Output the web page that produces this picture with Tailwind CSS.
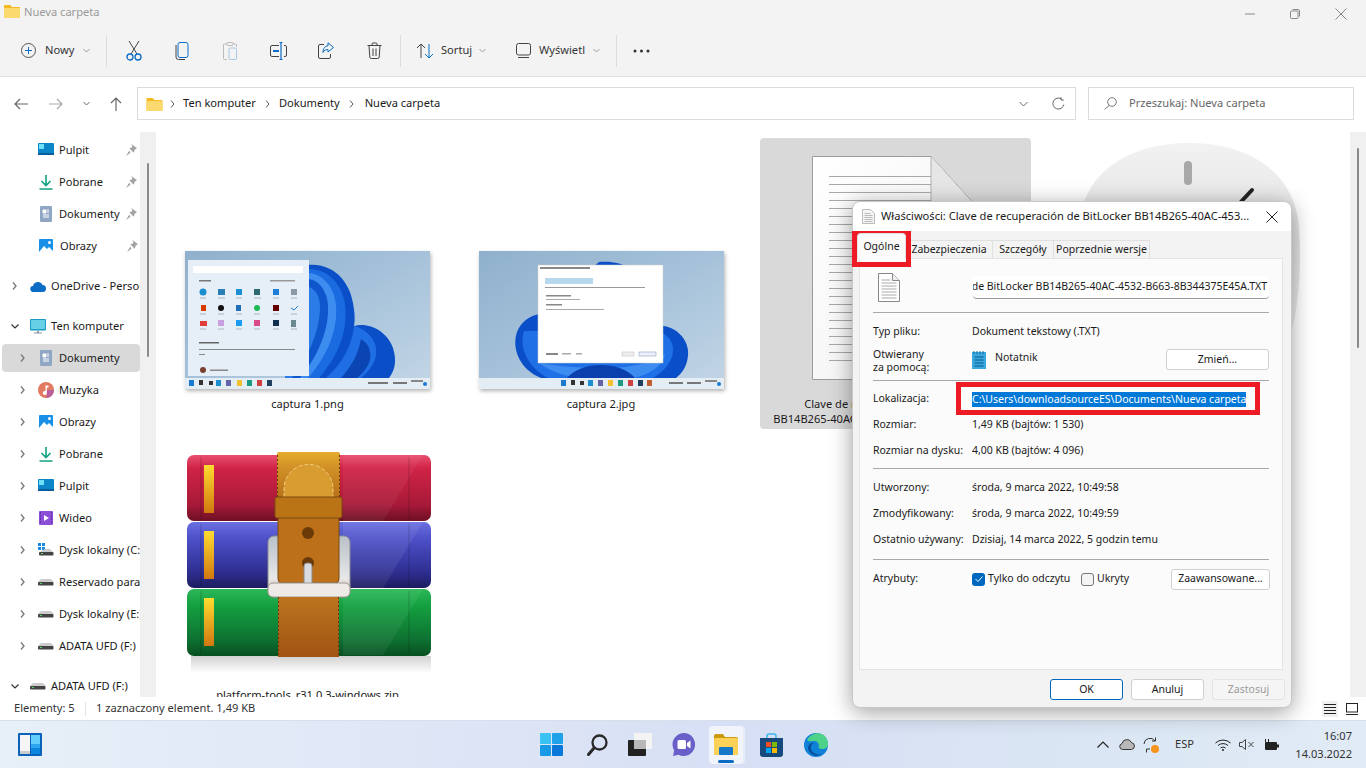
<!DOCTYPE html>
<html lang="pl">

<head>
    <meta charset="UTF-8">
    <title>Nueva carpeta</title>
    <script src="https://cdn.jsdelivr.net/npm/@tailwindcss/browser@4"></script>
</head>

<body class="bg-white text-[#1a1a1a] text-[11.1px] font-['Noto_Sans',sans-serif]">
<div class="relative w-[1366px] h-[768px] overflow-hidden flex flex-col">

    <!-- Title bar -->
    <div class="h-[25px] shrink-0 bg-[#f3f3f3] flex items-start pl-[4px] pt-[4px]">
        <svg width="16" height="14" viewBox="0 0 16 14"><path d="M0 2a1 1 0 0 1 1-1h5l2 2h7a1 1 0 0 1 1 1v9a1 1 0 0 1-1 1H1a1 1 0 0 1-1-1z" fill="#f5b921"/><rect y="4" width="16" height="10" rx="1" fill="#fcd96f"/></svg>
        <span class="ml-[4px] leading-4 text-[#9a9a9a]">Nueva carpeta</span>
        <div class="ml-auto flex items-center pt-[4px] pr-[19px]">
            <svg class="mr-[35px]" width="10" height="10" viewBox="0 0 10 10"><path d="M0 5h10" stroke="#888" /></svg>
            <svg class="mr-[35px]" width="10" height="10" viewBox="0 0 10 10" fill="none" stroke="#888"><rect x=".5" y="2" width="7.500" height="7.500" rx="1"/><path d="M2.500 .5h5.500a1.500 1.500 0 0 1 1.500 1.500v5.500"/></svg>
            <svg width="12" height="12" viewBox="0 0 12 12" fill="none" stroke="#888"><path d="M.5 .5l11 11M11.500 .5l-11 11"/></svg>
        </div>
    </div>

    <!-- Toolbar -->
    <div class="h-[52px] shrink-0 bg-[#f3f3f3] border-b border-[#e0e0e0] flex items-center pl-[21px] text-[#333]">
        <svg width="15" height="15" viewBox="0 0 15 15" fill="none"><circle cx="7.500" cy="7.500" r="7" stroke="#555"/><path d="M7.500 4v7M4 7.500h7" stroke="#0a6cc4"/></svg>
        <span class="ml-[9px] w-[38px]">Nowy</span>
        <svg width="7" height="5" viewBox="0 0 7 5" fill="none" stroke="#999"><path d="M.5 1l3 3 3-3"/></svg>
        <div class="w-px h-[32px] bg-[#dcdcdc] ml-[16px] mr-[3px]"></div>
        <div class="w-[48px] flex justify-center">
            <svg width="16" height="20" viewBox="0 0 16 20" fill="none"><path d="M3 0l8 13M13 0L5 13" stroke="#444"/><circle cx="4" cy="16" r="3" stroke="#0a6cc4" stroke-width="1.300"/><circle cx="12" cy="16" r="3" stroke="#0a6cc4" stroke-width="1.300"/></svg>
        </div>
        <div class="w-[48px] flex justify-center">
            <svg width="14" height="18" viewBox="0 0 14 18" fill="none"><rect x="3" y=".5" width="10" height="15" rx="2" stroke="#0a6cc4"/><path d="M1 3v12a2.500 2.500 0 0 0 2.500 2.500H10" stroke="#444"/></svg>
        </div>
        <div class="w-[48px] flex justify-center">
            <svg width="14" height="18" viewBox="0 0 14 18" fill="none"><path d="M4 2H1.500a1 1 0 0 0-1 1v13.500a1 1 0 0 0 1 1H4M10 2h2.500a1 1 0 0 1 1 1v2" stroke="#bbb"/><rect x="4" y=".5" width="6" height="3" rx="1" stroke="#bbb"/><rect x="6" y="6" width="7.500" height="11.500" rx="1.500" stroke="#a5c8e8"/></svg>
        </div>
        <div class="w-[48px] flex justify-center">
            <svg width="17" height="18" viewBox="0 0 17 18" fill="none"><path d="M9 3.500H2a1.500 1.500 0 0 0-1.500 1.500v8A1.500 1.500 0 0 0 2 14.500h7M14 3.500h1a1.500 1.500 0 0 1 1.500 1.500v8a1.500 1.500 0 0 1-1.500 1.500h-1" stroke="#444"/><path d="M9.500 .5h3M11 .5v17M9.500 17.500h3" stroke="#0a6cc4" stroke-width="1.200"/><rect x="3" y="8" width="6" height="2" fill="#0a6cc4"/></svg>
        </div>
        <div class="w-[48px] flex justify-center">
            <svg width="16" height="17" viewBox="0 0 16 17" fill="none"><path d="M6 2.500H2A1.500 1.500 0 0 0 .5 4v11A1.500 1.500 0 0 0 2 16.500h9a1.500 1.500 0 0 0 1.500-1.500v-3" stroke="#444"/><path d="M10 .8L15.500 5.500 10 10V7.500c-2.500 0-4 1-5 3 0-4 2-6.500 5-6.700z" stroke="#0a6cc4" stroke-linejoin="round"/></svg>
        </div>
        <div class="w-[48px] flex justify-center">
            <svg width="15" height="17" viewBox="0 0 15 17" fill="none" stroke="#444"><path d="M.5 3.500h14M5 3.500V2a1 1 0 0 1 1-1h3a1 1 0 0 1 1 1v1.500M2 3.500l.8 11.500a1.500 1.500 0 0 0 1.500 1.500h6.400a1.500 1.500 0 0 0 1.500-1.500L13 3.500M6 6.500v7.500M9 6.500v7.500"/></svg>
        </div>
        <div class="w-px h-[32px] bg-[#dcdcdc] ml-[2px]"></div>
        <svg class="ml-[15px]" width="18" height="16" viewBox="0 0 18 16" fill="none"><path d="M5 15V1M1 5l4-4 4 4" stroke="#444"/><path d="M13 1v14M9 11l4 4 4-4" stroke="#0a6cc4"/></svg>
        <span class="ml-[7px] w-[38px]">Sortuj</span>
        <svg width="7" height="5" viewBox="0 0 7 5" fill="none" stroke="#999"><path d="M.5 1l3 3 3-3"/></svg>
        <svg class="ml-[30px]" width="15" height="15" viewBox="0 0 15 15" fill="none" stroke="#444"><rect x=".5" y=".5" width="14" height="11.500" rx="2"/><path d="M2 14.500h11"/></svg>
        <span class="ml-[8px] w-[54px]">Wyświetl</span>
        <svg width="7" height="5" viewBox="0 0 7 5" fill="none" stroke="#999"><path d="M.5 1l3 3 3-3"/></svg>
        <div class="w-px h-[32px] bg-[#dcdcdc] ml-[16px]"></div>
        <svg class="ml-[16px]" width="17" height="4" viewBox="0 0 17 4" fill="#333"><circle cx="2" cy="2" r="1.500"/><circle cx="8.500" cy="2" r="1.500"/><circle cx="15" cy="2" r="1.500"/></svg>
    </div>

    <!-- Address row -->
    <div class="h-[55px] shrink-0 flex items-start pt-[10px]">
        <div class="w-[137px] h-[33px] flex items-center text-[#777]">
            <svg class="ml-[14px]" width="14" height="12" viewBox="0 0 14 12" fill="none" stroke="#666" stroke-width="1.200"><path d="M14 6H1M6 1L1 6l5 5"/></svg>
            <svg class="ml-[21px]" width="14" height="12" viewBox="0 0 14 12" fill="none" stroke="#aaa" stroke-width="1.200"><path d="M0 6h13M8 1l5 5-5 5"/></svg>
            <svg class="ml-[20px]" width="7" height="5" viewBox="0 0 7 5" fill="none" stroke="#666"><path d="M.5 1l3 3 3-3"/></svg>
            <svg class="ml-[20px]" width="12" height="14" viewBox="0 0 12 14" fill="none" stroke="#666" stroke-width="1.200"><path d="M6 14V1M1 6l5-5 5 5"/></svg>
        </div>
        <div class="w-[939px] h-[33px] border border-[#dcdcdc] flex items-center pl-[8px]">
            <svg width="17" height="14" viewBox="0 0 16 14"><path d="M0 2a1 1 0 0 1 1-1h5l2 2h7a1 1 0 0 1 1 1v9a1 1 0 0 1-1 1H1a1 1 0 0 1-1-1z" fill="#f5b921"/><rect y="4" width="16" height="10" rx="1" fill="#fcd96f"/></svg>
            <svg class="ml-[7px]" width="5" height="8" viewBox="0 0 5 8" fill="none" stroke="#555"><path d="M1 .5l3 3.500-3 3.500"/></svg>
            <span class="ml-[8px]">Ten komputer</span>
            <svg class="ml-[9px]" width="5" height="8" viewBox="0 0 5 8" fill="none" stroke="#555"><path d="M1 .5l3 3.500-3 3.500"/></svg>
            <span class="ml-[9px]">Dokumenty</span>
            <svg class="ml-[9px]" width="5" height="8" viewBox="0 0 5 8" fill="none" stroke="#555"><path d="M1 .5l3 3.500-3 3.500"/></svg>
            <span class="ml-[11px]">Nueva carpeta</span>
            <div class="ml-auto flex items-center gap-[24px] pr-[10px]">
                <svg width="9" height="6" viewBox="0 0 9 6" fill="none" stroke="#666"><path d="M.5 1l4 4 4-4"/></svg>
                <svg width="13" height="13" viewBox="0 0 13 13" fill="none" stroke="#666"><path d="M11.800 7.500A5.500 5.500 0 1 1 9.500 2M9 .2V3h2.800"/></svg>
            </div>
        </div>
        <div class="ml-[12px] w-[266px] h-[33px] border border-[#dcdcdc] flex items-center pl-[15px] text-[#666]">
            <svg width="13" height="13" viewBox="0 0 13 13" fill="none" stroke="#777"><circle cx="8" cy="5" r="4.300"/><path d="M5 8.500L.5 12.500"/></svg>
            <span class="ml-[12px]">Przeszukaj: Nueva carpeta</span>
        </div>
    </div>

    <!-- Main -->
    <div class="flex-1 flex min-h-0">
        <!-- Sidebar -->
        <div class="w-[140px] shrink-0 overflow-hidden pt-[4px] pl-[2px] whitespace-nowrap">
            <div class="h-[28px] mb-[4px] flex items-center pl-[36px]">
                <svg class="shrink-0" width="16" height="14" viewBox="0 0 16 14"><rect width="16" height="12" rx="1" fill="#0c86c6"/><rect x="1" y="1" width="5" height="5" fill="#6fe0f5"/><rect y="10" width="16" height="2" fill="#075e9c"/></svg>
                <span class="ml-[5px] w-[67px]">Pulpit</span>
                <svg class="shrink-0" width="11" height="12" viewBox="0 0 10 11" fill="#a0a0a0"><path d="M5 0l5 4-2 1-1 3-4-4 3-1zM3 6l-3 5 4-3z"/></svg>
            </div>
            <div class="h-[28px] mb-[4px] flex items-center pl-[36px]">
                <svg class="shrink-0" width="16" height="16" viewBox="0 0 16 16" fill="none" stroke="#10a37f" stroke-width="1.600"><path d="M8 1v10M3.500 7L8 11.500 12.500 7M1.500 15h13"/></svg>
                <span class="ml-[5px] w-[67px]">Pobrane</span>
                <svg class="shrink-0" width="11" height="12" viewBox="0 0 10 11" fill="#a0a0a0"><path d="M5 0l5 4-2 1-1 3-4-4 3-1zM3 6l-3 5 4-3z"/></svg>
            </div>
            <div class="h-[28px] mb-[4px] flex items-center pl-[38px]">
                <svg class="shrink-0" width="12" height="16" viewBox="0 0 12 16"><rect width="12" height="16" rx="1" fill="#8fa7c4"/><path d="M3 4h3v3H3zM7 4h2M7 6h2M3 9h6M3 11h6" stroke="#fff" fill="#fff"/></svg>
                <span class="ml-[7px] w-[67px]">Dokumenty</span>
                <svg class="shrink-0" width="11" height="12" viewBox="0 0 10 11" fill="#a0a0a0"><path d="M5 0l5 4-2 1-1 3-4-4 3-1zM3 6l-3 5 4-3z"/></svg>
            </div>
            <div class="h-[28px] mb-[12px] flex items-center pl-[37px]">
                <svg class="shrink-0" width="14" height="14" viewBox="0 0 14 14"><rect width="14" height="14" rx="1" fill="#1a8fe8"/><path d="M0 13l5-6 3 3 2-2 4 4v2H0z" fill="#fff"/><circle cx="10.500" cy="3.500" r="1.500" fill="#fff"/></svg>
                <span class="ml-[7px] w-[67px]">Obrazy</span>
                <svg class="shrink-0" width="11" height="12" viewBox="0 0 10 11" fill="#a0a0a0"><path d="M5 0l5 4-2 1-1 3-4-4 3-1zM3 6l-3 5 4-3z"/></svg>
            </div>
            <div class="h-[28px] mb-[12px] flex items-center pl-[10px]">
                <svg class="shrink-0" width="5" height="8" viewBox="0 0 5 8" fill="none" stroke="#777" stroke-width="1.300"><path d="M1 .5l3 3.500-3 3.500"/></svg>
                <svg class="shrink-0 ml-[13px]" width="16" height="11" viewBox="0 0 16 11"><path d="M3.500 11a3 3 0 0 1-.5-6 5 5 0 0 1 9.500-1A3.500 3.500 0 0 1 12.500 11z" fill="#0a6cc4"/></svg>
                <span class="ml-[5px]">OneDrive - Personal</span>
            </div>
            <div class="h-[28px] mb-[4px] flex items-center pl-[9px]">
                <svg class="shrink-0" width="8" height="5" viewBox="0 0 8 5" fill="none" stroke="#333" stroke-width="1.200"><path d="M.5 .5L4 4 7.500 .5"/></svg>
                <svg class="shrink-0 ml-[11px]" width="16" height="15" viewBox="0 0 16 15"><rect width="16" height="11.500" rx="1" fill="#1e9bc4"/><rect x="1" y="1" width="14" height="9" fill="#66d0e6"/><path d="M7 12h2v1.500h3v1H4v-1h3z" fill="#8a9aa8"/></svg>
                <span class="ml-[5px]">Ten komputer</span>
            </div>
            <div class="h-[28px] mb-[4px] flex items-center pl-[18px] bg-[#d9d9d9] rounded-sm">
                <svg class="shrink-0" width="5" height="8" viewBox="0 0 5 8" fill="none" stroke="#777" stroke-width="1.300"><path d="M1 .5l3 3.500-3 3.500"/></svg>
                <svg class="shrink-0 ml-[15px]" width="12" height="16" viewBox="0 0 12 16"><rect width="12" height="16" rx="1" fill="#8fa7c4"/><path d="M3 4h3v3H3zM7 4h2M7 6h2M3 9h6M3 11h6" stroke="#fff" fill="#fff"/></svg>
                <span class="ml-[7px]">Dokumenty</span>
            </div>
            <div class="h-[28px] mb-[4px] flex items-center pl-[18px]">
                <svg class="shrink-0" width="5" height="8" viewBox="0 0 5 8" fill="none" stroke="#777" stroke-width="1.300"><path d="M1 .5l3 3.500-3 3.500"/></svg>
                <svg class="shrink-0 ml-[13px]" width="16" height="16" viewBox="0 0 16 16"><circle cx="8" cy="8" r="8" fill="#e27a62"/><path d="M8 8a8 8 0 0 1 0 8 8 8 0 0 0 8-8z" fill="#b85f9c"/><path d="M7.500 3.500h3v2h-1.700V11a2 2 0 1 1-1.300-1.900z" fill="#fff"/></svg>
                <span class="ml-[5px]">Muzyka</span>
            </div>
            <div class="h-[28px] mb-[4px] flex items-center pl-[18px]">
                <svg class="shrink-0" width="5" height="8" viewBox="0 0 5 8" fill="none" stroke="#777" stroke-width="1.300"><path d="M1 .5l3 3.500-3 3.500"/></svg>
                <svg class="shrink-0 ml-[14px]" width="14" height="14" viewBox="0 0 14 14"><rect width="14" height="14" rx="1" fill="#1a8fe8"/><path d="M0 13l5-6 3 3 2-2 4 4v2H0z" fill="#fff"/><circle cx="10.500" cy="3.500" r="1.500" fill="#fff"/></svg>
                <span class="ml-[6px]">Obrazy</span>
            </div>
            <div class="h-[28px] mb-[4px] flex items-center pl-[18px]">
                <svg class="shrink-0" width="5" height="8" viewBox="0 0 5 8" fill="none" stroke="#777" stroke-width="1.300"><path d="M1 .5l3 3.500-3 3.500"/></svg>
                <svg class="shrink-0 ml-[13px]" width="16" height="16" viewBox="0 0 16 16" fill="none" stroke="#10a37f" stroke-width="1.600"><path d="M8 1v10M3.500 7L8 11.500 12.500 7M1.500 15h13"/></svg>
                <span class="ml-[5px]">Pobrane</span>
            </div>
            <div class="h-[28px] mb-[4px] flex items-center pl-[18px]">
                <svg class="shrink-0" width="5" height="8" viewBox="0 0 5 8" fill="none" stroke="#777" stroke-width="1.300"><path d="M1 .5l3 3.500-3 3.500"/></svg>
                <svg class="shrink-0 ml-[13px]" width="16" height="14" viewBox="0 0 16 14"><rect width="16" height="12" rx="1" fill="#0c86c6"/><rect x="1" y="1" width="5" height="5" fill="#6fe0f5"/><rect y="10" width="16" height="2" fill="#075e9c"/></svg>
                <span class="ml-[5px]">Pulpit</span>
            </div>
            <div class="h-[28px] mb-[4px] flex items-center pl-[18px]">
                <svg class="shrink-0" width="5" height="8" viewBox="0 0 5 8" fill="none" stroke="#777" stroke-width="1.300"><path d="M1 .5l3 3.500-3 3.500"/></svg>
                <svg class="shrink-0 ml-[14px]" width="14" height="14" viewBox="0 0 14 14"><rect width="14" height="14" rx="1" fill="#8c4fd8"/><path d="M5 4l5 3-5 3z" fill="#fff"/><path d="M1 2h1M1 5h1M1 8h1M1 11h1M12 2h1M12 5h1M12 8h1M12 11h1" stroke="#3a1a70"/></svg>
                <span class="ml-[6px]">Wideo</span>
            </div>
            <div class="h-[28px] mb-[4px] flex items-center pl-[18px]">
                <svg class="shrink-0" width="5" height="8" viewBox="0 0 5 8" fill="none" stroke="#777" stroke-width="1.300"><path d="M1 .5l3 3.500-3 3.500"/></svg>
                <svg class="shrink-0 ml-[13px]" width="16" height="14" viewBox="0 0 16 14"><path d="M0 0h3v3H0zM4 0h3v3H4zM0 4h3v3H0zM4 4h3v3H4z" fill="#1689e6"/><path d="M7 6h5l3.500 3.500H1z" fill="#ccc"/><rect x="1" y="9" width="14.500" height="3.500" rx="1" fill="#444"/><rect x="3" y="10" width="2" height="1" fill="#5cd65c"/></svg>
                <span class="ml-[5px]">Dysk lokalny (C:)</span>
            </div>
            <div class="h-[28px] mb-[4px] flex items-center pl-[18px]">
                <svg class="shrink-0" width="5" height="8" viewBox="0 0 5 8" fill="none" stroke="#777" stroke-width="1.300"><path d="M1 .5l3 3.500-3 3.500"/></svg>
                <svg class="shrink-0 ml-[13px]" width="16" height="7" viewBox="0 0 16 7"><path d="M3 0h10l3 3H0z" fill="#ccc"/><rect y="3" width="15.500" height="3.500" rx="1" fill="#444"/><rect x="2" y="4" width="2" height="1" fill="#5cd65c"/></svg>
                <span class="ml-[5px]">Reservado para</span>
            </div>
            <div class="h-[28px] mb-[4px] flex items-center pl-[18px]">
                <svg class="shrink-0" width="5" height="8" viewBox="0 0 5 8" fill="none" stroke="#777" stroke-width="1.300"><path d="M1 .5l3 3.500-3 3.500"/></svg>
                <svg class="shrink-0 ml-[13px]" width="16" height="7" viewBox="0 0 16 7"><path d="M3 0h10l3 3H0z" fill="#ccc"/><rect y="3" width="15.500" height="3.500" rx="1" fill="#444"/><rect x="2" y="4" width="2" height="1" fill="#5cd65c"/></svg>
                <span class="ml-[5px]">Dysk lokalny (E:)</span>
            </div>
            <div class="h-[28px] mb-[12px] flex items-center pl-[18px]">
                <svg class="shrink-0" width="5" height="8" viewBox="0 0 5 8" fill="none" stroke="#777" stroke-width="1.300"><path d="M1 .5l3 3.500-3 3.500"/></svg>
                <svg class="shrink-0 ml-[13px]" width="16" height="7" viewBox="0 0 16 7"><path d="M3 0h10l3 3H0z" fill="#ccc"/><rect y="3" width="15.500" height="3.500" rx="1" fill="#444"/><rect x="2" y="4" width="2" height="1" fill="#5cd65c"/></svg>
                <span class="ml-[5px]">ADATA UFD (F:)</span>
            </div>
            <div class="h-[28px] flex items-center pl-[9px]">
                <svg class="shrink-0" width="8" height="5" viewBox="0 0 8 5" fill="none" stroke="#333" stroke-width="1.200"><path d="M.5 .5L4 4 7.500 .5"/></svg>
                <svg class="shrink-0 ml-[11px]" width="16" height="7" viewBox="0 0 16 7"><path d="M3 0h10l3 3H0z" fill="#ccc"/><rect y="3" width="15.500" height="3.500" rx="1" fill="#444"/><rect x="2" y="4" width="2" height="1" fill="#5cd65c"/></svg>
                <span class="ml-[5px]">ADATA UFD (F:)</span>
            </div>
        </div>
        <div class="w-[16px] shrink-0 bg-[#f0f0f0] pt-[31px] pl-[7px]">
            <div class="w-[2px] h-[194px] bg-[#8a8a8a] rounded-full"></div>
        </div>

        <!-- Files -->
        <div class="flex-1 min-w-0 overflow-hidden pt-[6px] pl-[16px]">
            <div class="grid grid-cols-[repeat(4,271px)] auto-rows-[291px] gap-x-[22.500px]">

                <!-- captura 1 -->
                <div class="pt-[5px]">
                    <div class="h-[246px] flex items-end justify-center">
                        <svg class="shadow-[1px_2px_4px_rgba(0,0,0,0.3)]" width="245" height="138" viewBox="0 0 245 138">
                            <defs>
                                <linearGradient id="wall1" x1="0" y1="0" x2="1" y2="1"><stop offset="0" stop-color="#8fb0cc"/><stop offset=".5" stop-color="#a6c2da"/><stop offset="1" stop-color="#c3d6e6"/></linearGradient>
                            </defs>
                            <rect width="245" height="138" fill="url(#wall1)"/>
                            <path d="M122 14c24-3 42 14 46 38 2 11 2 18 1 23 15-4 33 5 39 22 4 13 2 22-4 30H100V20z" fill="#0b4fc8"/>
                            <path d="M122 18c20-1 35 14 38 36 3 25-6 50-26 73h-34V20z" fill="#1a6ae0"/>
                            <path d="M122 22c15 0 27 13 29 32 2 24-8 50-28 73h-23V25z" fill="#3d8cf0"/>
                            <path d="M122 28c11 0 20 11 21 27 1 24-10 50-28 72h-15V30z" fill="#0f55cc"/>
                            <path d="M122 36c7 0 13 8 13 20 0 24-12 50-28 71h-7V40z" fill="#2b7ce6"/>
                            <path d="M169 75c-2 20-12 38-28 52h35c12-10 18-22 14-34-3-9-12-16-21-18z" fill="#1f6ee4"/>
                            <path d="M176 88c-3 16-10 28-20 39h16c9-7 15-17 13-26-1-6-4-10-9-13z" fill="#0b45b4"/>
                            <rect x="3" y="9" width="121" height="116" fill="#e6eff8"/>
                            <rect x="8" y="15" width="110" height="7" fill="#fff"/>
                            <rect x="14" y="29" width="12" height="1.500" fill="#777"/><rect x="85" y="29" width="25" height="1.500" fill="#999"/>
                            <circle cx="18" cy="41" r="3.500" fill="#1c8fd0"/><rect x="33" y="38" width="7" height="6" fill="#2a7fb8"/><rect x="51" y="38" width="6" height="6" fill="#1c8fd0"/><rect x="69" y="38" width="6" height="6" fill="#2c6a70"/><rect x="88" y="38" width="6" height="6" fill="#1f7fd8"/><rect x="106" y="38" width="6" height="6" fill="#8b99a8"/>
                            <rect x="16" y="54" width="5" height="6" fill="#d83b01"/><circle cx="36" cy="57" r="3" fill="#111"/><rect x="51" y="54" width="5" height="6" fill="#1f6fb8"/><circle cx="72" cy="57" r="3" fill="#1db954"/><rect x="88" y="54" width="6" height="6" fill="#600"/><path d="M106 57l3 2 4-4" stroke="#1f7fd8" fill="none"/>
                            <rect x="15" y="70" width="7" height="5" fill="#e03c3c"/><rect x="33" y="69" width="6" height="6" fill="#c8a0e0"/><rect x="51" y="69" width="6" height="6" fill="#1d9bf0"/><rect x="69" y="69" width="6" height="6" fill="#d84a8a"/><rect x="88" y="69" width="6" height="6" fill="#103050"/><rect x="106" y="69" width="5" height="7" fill="#6a8a90"/>
                            <path d="M15 47h6M33 47h7M51 47h6M69 47h7M88 47h6M106 47h6M15 63h6M33 63h6M51 63h6M69 63h6M88 63h6M106 63h6M15 78h6M33 78h6M51 78h6M69 78h6M88 78h6M106 78h6" stroke="#9aa5b0" stroke-width=".8"/>
                            <rect x="14" y="91" width="20" height="1.500" fill="#666"/><rect x="14" y="98" width="96" height="1" fill="#888"/><rect x="14" y="103" width="6" height="1" fill="#888"/>
                            <circle cx="18" cy="119" r="3" fill="#7a4030"/><rect x="25" y="118.500" width="18" height="1.500" fill="#888"/>
                            <rect y="127" width="245" height="11" fill="#e4ecf4"/>
                            <rect x="4" y="129" width="5" height="6" fill="#1a7ad0"/><rect x="14" y="129" width="4" height="5" fill="#333"/><rect x="24" y="130" width="4" height="4" fill="#333"/><rect x="31" y="129" width="5" height="6" fill="#1d8fd0"/><rect x="41" y="129" width="5" height="6" fill="#6264a7"/><rect x="52" y="129" width="5" height="6" fill="#f5c030"/><rect x="62" y="129" width="5" height="6" fill="#1a9a80"/><rect x="72" y="129" width="5" height="6" fill="#d04040"/><rect x="82" y="129" width="5" height="6" fill="#204060"/>
                            <rect x="183" y="131" width="20" height="2" fill="#777"/><rect x="208" y="131" width="14" height="2" fill="#777"/><rect x="226" y="129" width="12" height="2" fill="#888"/><circle cx="240" cy="133" r="2" fill="#1a7ad0"/>
                        </svg>
                    </div>
                    <p class="mt-[7px] text-center leading-[15px]">captura 1.png</p>
                </div>

                <!-- captura 2 -->
                <div class="pt-[5px]">
                    <div class="h-[246px] flex items-end justify-center">
                        <svg class="shadow-[1px_2px_4px_rgba(0,0,0,0.3)]" width="245" height="138" viewBox="0 0 245 138">
                            <defs>
                                <linearGradient id="wall2" x1="0" y1="0" x2="1" y2="1"><stop offset="0" stop-color="#8fb0cc"/><stop offset=".5" stop-color="#a6c2da"/><stop offset="1" stop-color="#c3d6e6"/></linearGradient>
                            </defs>
                            <rect width="245" height="138" fill="url(#wall2)"/>
                            <path d="M120 11c20-2 45 6 52 36 2 10 2 18 1 28 18-3 34 8 36 24 1 12-4 22-12 28H62c-20-8-30-28-24-46 4-10 12-16 22-18z" fill="#0b4fc8"/>
                            <path d="M45 80c-6 18 6 38 24 47h105c10-6 20-16 20-28 0-12-10-20-24-20z" fill="#1f70e6"/>
                            <path d="M60 112c12 9 30 15 48 15h46c16-3 30-12 32-24-8 6-30 14-58 14-28 0-50-2-68-5z" fill="#3d8cf0"/>
                            <path d="M88 127c8-9 20-13 34-13s26 4 34 13z" fill="#0a3fae"/>
                            <rect x="59" y="14" width="125" height="98" fill="#fff" stroke="#ccc" stroke-width=".5"/>
                            <rect x="61" y="16" width="50" height="2" fill="#888"/>
                            <rect x="66" y="27" width="48" height="6" fill="#b8d8ee"/>
                            <rect x="66" y="36" width="100" height="1" fill="#999"/>
                            <rect x="67" y="44" width="25" height="1.500" fill="#888"/><rect x="67" y="48" width="34" height="1" fill="#aaa"/>
                            <rect x="67" y="53" width="16" height="1.500" fill="#888"/><rect x="67" y="58" width="58" height="1" fill="#aaa"/>
                            <rect x="67" y="102" width="12" height="2" fill="#888"/><rect x="83" y="102" width="9" height="1.500" fill="#aaa"/><rect x="97" y="102" width="6" height="1.500" fill="#aaa"/>
                            <rect x="143" y="101" width="12" height="4" fill="#eee" stroke="#bbb" stroke-width=".5"/><rect x="160" y="101" width="17" height="4" fill="#eef" stroke="#79a" stroke-width=".5"/>
                            <rect y="127" width="245" height="11" fill="#e4ecf4"/>
                            <rect x="82" y="129" width="5" height="6" fill="#1a7ad0"/><rect x="92" y="129" width="4" height="5" fill="#333"/><rect x="101" y="130" width="4" height="4" fill="#333"/><rect x="109" y="129" width="5" height="6" fill="#1d8fd0"/><rect x="119" y="129" width="5" height="6" fill="#6264a7"/><rect x="129" y="129" width="5" height="6" fill="#f5c030"/><rect x="139" y="129" width="5" height="6" fill="#1a9a80"/><rect x="149" y="129" width="5" height="6" fill="#d04040"/><rect x="159" y="129" width="5" height="6" fill="#204060"/><rect x="168" y="129" width="5" height="6" fill="#c06030"/>
                            <rect x="190" y="131" width="14" height="2" fill="#777"/><rect x="208" y="131" width="14" height="2" fill="#777"/><rect x="226" y="129" width="12" height="2" fill="#888"/><circle cx="240" cy="133" r="2" fill="#1a7ad0"/>
                        </svg>
                    </div>
                    <p class="mt-[7px] text-center leading-[15px]">captura 2.jpg</p>
                </div>

                <!-- text file, selected -->
                <div class="pt-[5px] bg-[#d9d9d9] rounded-sm ml-px -mr-px">
                    <div class="h-[246px] flex justify-start pl-[52px] pt-[13px]">
                        <svg width="170" height="224" viewBox="0 0 170 224">
                            <defs>
                                <linearGradient id="page" x1="0" y1="0" x2="1" y2="1"><stop offset="0" stop-color="#fff"/><stop offset=".6" stop-color="#f6f6f6"/><stop offset="1" stop-color="#e2e2e2"/></linearGradient>
                            </defs>
                            <path d="M.5 .5H119L169.500 56V223.500H.5z" fill="url(#page)" stroke="#9c9c9c"/>
                            <path d="M119 .5V56h50" fill="#e6e6e6" stroke="#b0b0b0"/>
                            <path d="M17 20.500h102M17 28.500h102M17 36.500h102M17 44.500h102M17 52.500h102M17 60.500h136M17 68.500h136M17 76.500h136M17 84.500h136M17 92.500h136M17 100.500h136M17 108.500h136M17 116.500h136M17 124.500h136M17 132.500h136M17 140.500h136M17 148.500h136M17 156.500h136M17 164.500h136M17 172.500h136M17 180.500h136M17 188.500h136M17 196.500h136M17 204.500h136" stroke="#a8a8a8"/>
                        </svg>
                    </div>
                    <p class="mt-[7px] text-center leading-[15px] whitespace-nowrap">Clave de recuperación de BitLocker<br>BB14B265-40AC-4532-B663-8B344375E45A.TXT</p>
                </div>

                <!-- mouse picture -->
                <div class="pt-[5px] ml-px -mr-px">
                    <div class="h-[246px] flex justify-center">
                        <svg width="222" height="246" viewBox="0 0 222 246">
                            <defs>
                                <linearGradient id="mouse" x1="0" y1="0" x2="0" y2="1"><stop offset="0" stop-color="#f2f2f2"/><stop offset=".4" stop-color="#e2e2e2"/><stop offset="1" stop-color="#f4f4f4"/></linearGradient>
                            </defs>
                            <path d="M1 84C4 30 50 0 111 0s106 30 110 84c3 50 0 110-30 162H30C6 200-2 140 1 84z" fill="url(#mouse)"/>
                            <rect x="106" y="18" width="8" height="24" rx="4" fill="#a8a8a8"/>
                            <path d="M160 62l14-15" stroke="#222" stroke-width="4" stroke-linecap="round"/>
                        </svg>
                    </div>
                </div>

                <!-- winrar -->
                <div class="pt-[5px]">
                    <div class="h-[246px] flex items-end justify-center">
                        <svg width="271" height="246" viewBox="0 0 271 246">
                            <defs>
                                <linearGradient id="red" x1="0" y1="0" x2="0" y2="1"><stop offset="0" stop-color="#e8506f"/><stop offset=".2" stop-color="#d02347"/><stop offset=".75" stop-color="#a81a38"/><stop offset="1" stop-color="#6c0f24"/></linearGradient>
                                <linearGradient id="blue" x1="0" y1="0" x2="0" y2="1"><stop offset="0" stop-color="#6a6fe0"/><stop offset=".25" stop-color="#4d50c8"/><stop offset=".75" stop-color="#2f2f92"/><stop offset="1" stop-color="#1c1c60"/></linearGradient>
                                <linearGradient id="green" x1="0" y1="0" x2="0" y2="1"><stop offset="0" stop-color="#2cb858"/><stop offset=".25" stop-color="#14a040"/><stop offset=".75" stop-color="#0e7232"/><stop offset="1" stop-color="#074f20"/></linearGradient>
                                <linearGradient id="belt" x1="0" y1="0" x2="0" y2="1"><stop offset="0" stop-color="#e4ac2c"/><stop offset=".2" stop-color="#d49428"/><stop offset=".55" stop-color="#c07a1c"/><stop offset="1" stop-color="#a85c16"/></linearGradient>
                                <linearGradient id="lower" x1="0" y1="0" x2="0" y2="1"><stop offset="0" stop-color="#bc7420"/><stop offset="1" stop-color="#a05412"/></linearGradient>
                                <linearGradient id="tag" x1="0" y1="0" x2="0" y2="1"><stop offset="0" stop-color="#ffdc30"/><stop offset="1" stop-color="#d07810"/></linearGradient>
                                <linearGradient id="buckle" x1="0" y1="0" x2="0" y2="1"><stop offset="0" stop-color="#b8c0c8"/><stop offset=".7" stop-color="#e8e8e8"/><stop offset="1" stop-color="#c0a090"/></linearGradient>
                                <linearGradient id="floor" x1="0" y1="0" x2="0" y2="1"><stop offset="0" stop-color="#000" stop-opacity=".18"/><stop offset="1" stop-color="#000" stop-opacity="0"/></linearGradient>
                            </defs>
                            <g transform="translate(1 -5)">
                                <rect x="18" y="227" width="240" height="17" fill="url(#floor)"/>
                                <rect x="14" y="26" width="244" height="66" rx="7" fill="url(#red)"/>
                                <rect x="14" y="93" width="244" height="66" rx="7" fill="url(#blue)"/>
                                <rect x="14" y="160" width="244" height="67" rx="7" fill="url(#green)"/>
                                <path d="M170 26h80l-40 66h-40z" fill="#fff" fill-opacity=".05"/>
                                <path d="M170 93h80l-40 66h-40z" fill="#fff" fill-opacity=".07"/>
                                <path d="M170 160h80l-40 66h-40z" fill="#fff" fill-opacity=".06"/>
                                <path d="M28 28v62M28 95v62M28 162v63M236 28v62M236 95v62M236 162v63" stroke="#000" stroke-opacity=".18"/>
                                <rect x="31" y="36" width="10" height="48" fill="url(#tag)"/>
                                <rect x="31" y="102" width="10" height="48" fill="url(#tag)"/>
                                <rect x="31" y="169" width="10" height="48" fill="url(#tag)"/>
                                <rect x="95" y="107" width="82" height="61" rx="6" fill="url(#buckle)" stroke="#8a8a90"/>
                                <rect x="104" y="23" width="63" height="66" rx="2" fill="url(#belt)"/>
                                <path d="M111 68v-8a24 24 0 0 1 49 0v8" fill="#d89c30" stroke="#f0d080" stroke-dasharray="4 2"/>
                                <rect x="105" y="87" width="61" height="67" rx="4" fill="#bc701a" stroke="#7a4a10"/>
                                <rect x="102" y="68" width="67" height="21" rx="2" fill="#ba7416" stroke="#7a4a10"/>
                                <circle cx="135" cy="104" r="6" fill="#6a3a08"/>
                                <circle cx="135" cy="134" r="6" fill="#6a3a08"/>
                                <rect x="131" y="134" width="8" height="25" rx="3" fill="#d8dce0" stroke="#888"/>
                                <rect x="95" y="154" width="82" height="14" rx="5" fill="#eeeae6" stroke="#a09890"/>
                                <rect x="105" y="168" width="61" height="60" fill="url(#lower)"/>
                                <path d="M105.500 168v60M165.500 168v60M104.500 26v42M166.500 26v42" stroke="#6a3a08" stroke-dasharray="2 2"/>
                            </g>
                        </svg>
                    </div>
                    <p class="mt-[7px] text-center leading-[15px]">platform-tools_r31.0.3-windows.zip</p>
                </div>
            </div>
        </div>
        <div class="w-[16px] shrink-0 bg-[#f0f0f0] pt-[16px] pl-[7px]">
            <div class="w-[2px] h-[200px] bg-[#8a8a8a] rounded-full"></div>
        </div>
    </div>

    <!-- Status bar -->
    <div class="h-[23px] shrink-0 bg-white flex items-center pl-[14px] pr-[8px] text-[#333]">
        <span class="w-[61px]">Elementy: 5</span>
        <div class="w-px h-[14px] bg-[#e4e4e4] ml-[10px] mr-[10px]"></div>
        <span>1 zaznaczony element. 1,49 KB</span>
        <div class="ml-auto flex items-center gap-[8px]">
            <div class="w-[16px] h-[16px] bg-[#f0f0f0] flex items-center justify-center">
                <svg width="12" height="10" viewBox="0 0 12 10" stroke="#222"><path d="M0 .5h12M0 3.500h12M0 6.500h12M0 9.500h12"/></svg>
            </div>
            <svg width="12" height="12" viewBox="0 0 12 12" fill="none" stroke="#222"><rect x=".5" y=".5" width="11" height="8.500"/><path d="M0 11.500h12"/></svg>
        </div>
    </div>

    <!-- Taskbar -->
    <div class="h-[48px] shrink-0 bg-[linear-gradient(90deg,#e7eff8_0%,#dfe6f6_30%,#d6dff4_55%,#dae5f4_75%,#e0ebf6_100%)] border-t border-[#d8dfea] flex items-center">
        <svg class="ml-[18px]" width="24" height="23" viewBox="0 0 24 23"><rect width="24" height="23" rx="1" fill="#0a63b8"/><rect x="2" y="2" width="10" height="19" fill="#f5f5f5"/><rect x="2" y="18" width="10" height="3" fill="#ccc"/><rect x="13" y="2" width="9" height="9" fill="#63cdfb"/><rect x="13" y="11" width="9" height="4" fill="#2ea5ef"/><rect x="13" y="15" width="9" height="6" fill="#0a86e0"/></svg>
        <div class="ml-[498px] flex items-center">
            <svg width="23" height="23" viewBox="0 0 23 23"><rect width="11" height="11" rx="1" fill="#3ac3f2"/><rect x="12" width="11" height="11" rx="1" fill="#1fa2e8"/><rect y="12" width="11" height="11" rx="1" fill="#1a9ae5"/><rect x="12" y="12" width="11" height="11" rx="1" fill="#0a78d8"/></svg>
            <svg class="ml-[24px]" width="21" height="22" viewBox="0 0 21 22" fill="none" stroke="#2a2a2a"><circle cx="12.500" cy="8.500" r="7" stroke-width="2.300"/><path d="M7 14l-5.500 6.500" stroke-width="3" stroke-linecap="round"/></svg>
            <svg class="ml-[20px]" width="24" height="23" viewBox="0 0 24 23"><rect x="6" width="18" height="16" rx="1" fill="#f4f4f4"/><rect y="7" width="18" height="16" rx="1" fill="#222"/><rect x="6" y="7" width="12" height="9" fill="#b8b8b8"/></svg>
            <svg class="ml-[20px]" width="23" height="23" viewBox="0 0 23 23"><path d="M11.500 0a11.500 11.500 0 1 1-5 21.800L1 23l1.200-5.500A11.500 11.500 0 0 1 11.500 0z" fill="#6a5fc8"/><rect x="5.500" y="7" width="8.500" height="9" rx="1.500" fill="#fff"/><path d="M15 10l3.500-2.500v8L15 13z" fill="#fff"/></svg>
            <div class="ml-[14px] relative w-[34px] h-[38px] bg-[#f1f4fb] rounded-[4px] flex items-center justify-center shadow-[2px_0_0_#e6ecf8]">
                <svg width="24" height="21" viewBox="0 0 24 21"><path d="M0 2a2 2 0 0 1 2-2h7l2 3h11a2 2 0 0 1 2 2v14a2 2 0 0 1-2 2H2a2 2 0 0 1-2-2z" fill="#cc9a10"/><rect y="4" width="24" height="17" rx="2" fill="#fbd257"/><rect x="5" y="13" width="14" height="8" rx="1" fill="#1578c8"/></svg>
                <div class="absolute bottom-[1px] left-[9px] w-[16px] h-[3px] rounded-full bg-[#0a6cc4]"></div>
            </div>
            <svg class="ml-[17px]" width="23" height="24" viewBox="0 0 23 24"><path d="M7 5V3a2 2 0 0 1 2-2h5a2 2 0 0 1 2 2v2" fill="none" stroke="#3bb5e8" stroke-width="1.500"/><path d="M0 5h23v16a3 3 0 0 1-3 3H3a3 3 0 0 1-3-3z" fill="#174a7c"/><rect x="6" y="9" width="5" height="5" fill="#f25022"/><rect x="12" y="9" width="5" height="5" fill="#7fba00"/><rect x="6" y="15" width="5" height="5" fill="#00a4ef"/><rect x="12" y="15" width="5" height="5" fill="#ffb900"/></svg>
            <svg class="ml-[21px]" width="24" height="24" viewBox="0 0 24 24"><circle cx="12" cy="12" r="12" fill="#0f82d8"/><path d="M3 7C6 1 13-1 18 1c4 2 6 6 6 10 0 3-2 5-6 5-3 0-4-1-3-3 0-3-2-5-5-5-3 0-5 1-7-1z" fill="#4ed28a"/><path d="M10 10c-3 1-4 5-2 8 2 3 6 4 10 3-5 4-13 1-14-6 0-3 3-6 6-5z" fill="#0a4f9e"/></svg>
        </div>
        <div class="ml-auto flex items-center text-[#333]">
            <svg width="12" height="7" viewBox="0 0 12 7" fill="none" stroke="#222" stroke-width="1.200"><path d="M.5 6.500L6 1l5.500 5.500"/></svg>
            <svg class="ml-[10px]" width="16" height="11" viewBox="0 0 16 11"><path d="M3.500 10.500a3 3 0 0 1-.5-5.900 5 5 0 0 1 9.500-1 3.500 3.500 0 0 1 0 6.900z" fill="#b8b8b8" stroke="#333"/></svg>
            <div class="ml-[8px] relative w-[16px] h-[16px]">
                <svg width="16" height="16" viewBox="0 0 16 16" fill="none" stroke="#333"><path d="M1 7a6 6 0 0 1 11-3M12.500 .5v3.500H9M3.500 15.500V12H7"/></svg>
                <div class="absolute right-0 bottom-0 w-[8px] h-[8px] rounded-full bg-[#f7941d]"></div>
            </div>
            <span class="ml-[16px] w-[20px]">ESP</span>
            <svg class="ml-[20px]" width="16" height="12" viewBox="0 0 16 12" fill="none" stroke="#222"><path d="M.5 4a11 11 0 0 1 15 0M3 6.500a7.500 7.500 0 0 1 10 0M5.500 9a4 4 0 0 1 5 0"/><circle cx="8" cy="11" r="1" fill="#222" stroke="none"/></svg>
            <svg class="ml-[8px]" width="15" height="11" viewBox="0 0 15 11" fill="none" stroke="#444"><path d="M.5 3.500h2.500L6.500 .5v10L3 7.500H.5zM9.500 3l5 5M14.500 3l-5 5"/></svg>
            <svg class="ml-[9px]" width="16" height="12" viewBox="0 0 16 12" fill="#222"><rect x="2" y="3" width="12" height="8" rx="1"/><rect x="14" y="5.500" width="2" height="3"/><path d="M2 0h1v3H2zM5 0h1v3H5z"/></svg>
            <div class="ml-[14px] mr-[14px] w-[59px] text-right leading-[18px]">16:07<br>14.03.2022</div>
        </div>
    </div>

    <!-- Properties dialog -->
    <div class="absolute left-[852px] top-[201px] w-[440px] h-[507px] bg-[#f3f3f3] rounded-lg border border-[#c8c8c8] shadow-[0_4px_22px_rgba(0,0,0,0.38)] flex flex-col text-[10.5px]">
        <div class="h-[29px] shrink-0 bg-white rounded-t-lg flex items-center pl-[9px] pr-[13px] text-[11.1px]">
            <svg width="13" height="15" viewBox="0 0 13 15"><path d="M.5 .5h8l4 4v10H.5z" fill="#f4f4f4" stroke="#bbb"/><path d="M2.500 4.500h6M2.500 6.500h8M2.500 8.500h8M2.500 10.500h8M2.500 12.500h8" stroke="#bbb"/></svg>
            <span class="ml-[6px] flex-1 whitespace-nowrap overflow-hidden">Właściwości: Clave de recuperación de BitLocker BB14B265-40AC-453...</span>
            <svg class="ml-[8px]" width="12" height="12" viewBox="0 0 12 12" fill="none" stroke="#222"><path d="M.5 .5l11 11M11.500 .5l-11 11"/></svg>
        </div>
        <div class="h-[27px] shrink-0 flex items-end pl-[4px]">
            <div class="relative z-10 w-[49px] h-[26px] bg-[#fbfbfb] border border-[#e0e0e0] border-b-0 rounded-t flex items-center justify-center -mb-px">Ogólne</div>
            <div class="w-[87px] h-[18px] border-t border-r border-[#e0e0e0] flex items-center justify-center">Zabezpieczenia</div>
            <div class="w-[61px] h-[18px] border-t border-r border-[#e0e0e0] flex items-center justify-center">Szczegóły</div>
            <div class="w-[96px] h-[18px] border-t border-r border-[#e0e0e0] flex items-center justify-center whitespace-nowrap">Poprzednie wersje</div>
        </div>
        <div class="ml-[6px] w-[424px] h-[412px] shrink-0 bg-[#fbfbfb] border border-[#e4e4e4] px-[13px] pt-[14px]">
            <div class="h-[29px] flex items-center">
                <svg class="ml-[5px] shrink-0" width="22" height="29" viewBox="0 0 22 29"><path d="M.5 .5h14l7 7v21H.5z" fill="#fff" stroke="#888"/><path d="M14.500 .5v7h7" fill="#eee" stroke="#888"/><path d="M3.500 7h9M3.500 10h15M3.500 13h15M3.500 16h15M3.500 19h15M3.500 22h15M3.500 25h15" stroke="#aaa"/></svg>
                <div class="ml-[73px] w-[297px] h-[23px] bg-white border-b border-[#9a9a9a] rounded-sm overflow-hidden flex items-center justify-end pr-[2px] whitespace-nowrap">Clave de recuperación de BitLocker BB14B265-40AC-4532-B663-8B344375E45A.TXT</div>
            </div>
            <div class="h-px bg-[#a8a8a8] mt-[10px]"></div>
            <div class="h-[34px] flex items-center pt-[4px]">
                <span class="w-[99px]">Typ pliku:</span><span>Dokument tekstowy (.TXT)</span>
            </div>
            <div class="h-[28px] flex items-center">
                <span class="w-[99px] leading-[13px]">Otwierany<br>za pomocą:</span>
                <svg class="-mt-[2px]" width="14" height="18" viewBox="0 0 14 18"><rect y="1" width="14" height="17" fill="#3aa8dc"/><path d="M2.500 6h9M2.500 9h9M2.500 12h9M2.500 15h9" stroke="#0b5a8c"/><path d="M2 0v3M5 0v3M8 0v3M11 0v3" stroke="#1a6a9c"/></svg>
                <span class="ml-[9px] -mt-[6px]">Notatnik</span>
                <button class="ml-auto -mt-[3px] w-[103px] h-[21px] bg-white border border-[#d0d0d0] rounded-[3px]">Zmień...</button>
            </div>
            <div class="h-px bg-[#a8a8a8] mt-[5px]"></div>
            <div class="h-[31px] flex items-center pt-[5px]">
                <span class="w-[99px]">Lokalizacja:</span><span class="bg-[#0078d7] text-white leading-[15px] whitespace-nowrap">C:\Users\downloadsourceES\Documents\Nueva carpeta</span>
            </div>
            <div class="h-[26px] flex items-center">
                <span class="w-[99px]">Rozmiar:</span><span>1,49 KB (bajtów: 1 530)</span>
            </div>
            <div class="h-[26px] flex items-center">
                <span class="w-[99px]">Rozmiar na dysku:</span><span>4,00 KB (bajtów: 4 096)</span>
            </div>
            <div class="h-px bg-[#a8a8a8] mt-[4px]"></div>
            <div class="h-[32px] flex items-center pt-[6px]">
                <span class="w-[99px]">Utworzony:</span><span>środa, 9 marca 2022, 10:49:58</span>
            </div>
            <div class="h-[26px] flex items-center">
                <span class="w-[99px]">Zmodyfikowany:</span><span>środa, 9 marca 2022, 10:49:59</span>
            </div>
            <div class="h-[26px] flex items-center">
                <span class="w-[99px] whitespace-nowrap">Ostatnio używany:</span><span>Dzisiaj, 14 marca 2022, 5 godzin temu</span>
            </div>
            <div class="h-px bg-[#a8a8a8] mt-[6px]"></div>
            <div class="h-[38px] flex items-center">
                <span class="w-[99px]">Atrybuty:</span>
                <span class="w-[13px] h-[13px] rounded-[3px] bg-[#0067c0] flex items-center justify-center">
                    <svg width="8" height="6" viewBox="0 0 8 6" fill="none" stroke="#fff"><path d="M.5 3l2.500 2.500L7.500 .5"/></svg>
                </span>
                <span class="ml-[3px] w-[80px] whitespace-nowrap">Tylko do odczytu</span>
                <span class="ml-[13px] w-[13px] h-[13px] rounded-[3px] bg-[#f4f4f4] border border-[#777]"></span>
                <span class="ml-[3px]">Ukryty</span>
                <button class="ml-auto -mr-px w-[99px] h-[21px] bg-white border border-[#d0d0d0] rounded-[3px]">Zaawansowane...</button>
            </div>
        </div>
        <div class="flex-1 flex items-start justify-end gap-[8px] pt-[9px] pr-[6px]">
            <button class="w-[73px] h-[21px] bg-white border border-[#0067c0] rounded-[3px]">OK</button>
            <button class="w-[73px] h-[21px] bg-white border border-[#d0d0d0] rounded-[3px]">Anuluj</button>
            <button class="w-[73px] h-[21px] bg-[#f5f5f5] border border-[#e4e4e4] rounded-[3px] text-[#9a9a9a]">Zastosuj</button>
        </div>
    </div>

    <!-- Red annotation frames -->
    <div class="absolute left-[852px] top-[231px] w-[59px] h-[36px] border-[5px] border-[#ed1c24]"></div>
    <div class="absolute left-[956px] top-[382px] w-[304px] h-[33px] border-[5px] border-[#ed1c24]"></div>
</div>
</body>

</html>
